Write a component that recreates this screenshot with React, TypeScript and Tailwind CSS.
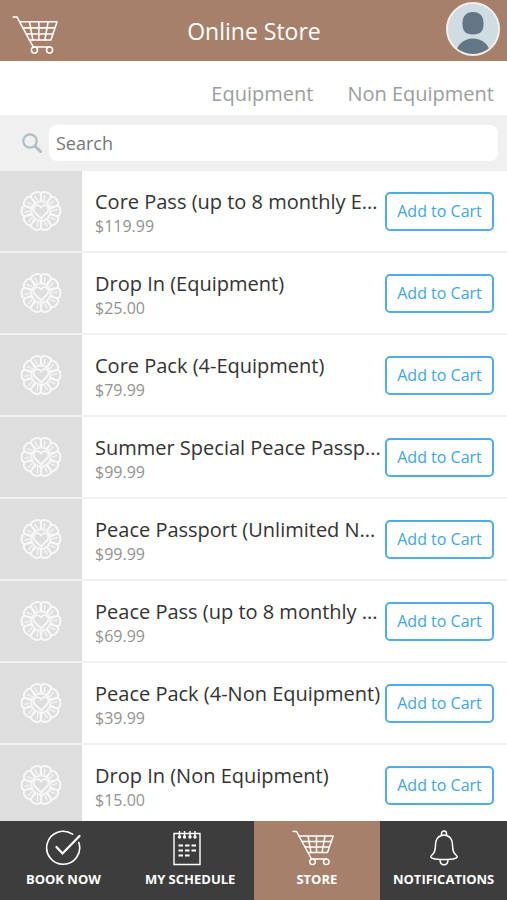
import type { ReactNode } from "react";

type Product = { name: string; price: string };

const products: Product[] = [
  { name: "Core Pass (up to 8 monthly E...", price: "$119.99" },
  { name: "Drop In (Equipment)", price: "$25.00" },
  { name: "Core Pack (4-Equipment)", price: "$79.99" },
  { name: "Summer Special Peace Passp...", price: "$99.99" },
  { name: "Peace Passport (Unlimited N...", price: "$99.99" },
  { name: "Peace Pass (up to 8 monthly ...", price: "$69.99" },
  { name: "Peace Pack (4-Non Equipment)", price: "$39.99" },
  { name: "Drop In (Non Equipment)", price: "$15.00" },
];

function CartIcon({ className }: { className: string }) {
  return (
    <svg viewBox="0 0 42 36" className={className} fill="none" stroke="currentColor" strokeWidth="1.4" strokeLinecap="round" strokeLinejoin="round" aria-hidden="true">
      <path d="M1 1.500h3.500L19.500 29h14.500" />
      <path d="M7 6h34.200L35.500 22.500H16" />
      <path d="M10 11.500h29.300M13 17h24.400M16 6l3 16.500M24.500 6v16.500M33 6l-3 16.500" />
      <circle cx="20.500" cy="31.800" r="2.800" fill="#a6806a" />
      <circle cx="34.300" cy="31.800" r="2.800" fill="#a6806a" />
    </svg>
  );
}

function CheckIcon() {
  return (
    <svg viewBox="0 0 36 36" className="size-9" fill="none" stroke="currentColor" strokeWidth="1.6" strokeLinecap="round" aria-hidden="true">
      <path d="M27.500 4.200A16.500 16.500 0 1 0 33.800 12.500" />
      <path d="M11.500 17l6 6.500L34.500 6" strokeWidth="2.2" />
    </svg>
  );
}

function ScheduleIcon() {
  return (
    <svg viewBox="0 0 28 36" className="h-9 w-7" fill="none" stroke="currentColor" strokeWidth="1.4" aria-hidden="true">
      <path d="M1 3.500h26v31H1z" />
      <path d="M6.500 1v6M11.500 1v6M17 1v6M22 1v6" />
      <path d="M6.500 7v.1M11.500 7v.1M17 7v.1M22 7v.1" strokeWidth="3.400" strokeLinecap="round" />
      <path d="M5.500 15.500h18M5.500 20.500h18M5.500 25.500h11" strokeWidth="2" strokeDasharray="4.500 2" />
    </svg>
  );
}

function BellIcon() {
  return (
    <svg viewBox="0 0 30 36" className="h-9 w-8" fill="none" stroke="currentColor" strokeWidth="1.5" strokeLinejoin="round" aria-hidden="true">
      <path d="M12.500 5.500C7.500 7 6.500 11 6.500 15c0 6-1 8.500-4 10.500-3 2.500 3 4 12.500 4s15.500-1.500 12.500-4c-3-2-4-4.500-4-10.500 0-4-1-8-6-9.500" />
      <path d="M12.500 5.500V3.500a2.500 2.500 0 0 1 5 0v2c-1.500-.6-3.500-.6-5 0z" />
      <path d="M11 29.500c0 7 8 7 8 0" />
    </svg>
  );
}

function StudioLogo() {
  return (
    <svg viewBox="-21 -21 42 42" className="size-[42px]" fill="none" stroke="#f8f8f8" strokeLinecap="round" strokeLinejoin="round" aria-hidden="true">
      {Array.from({ length: 10 }, (_, i) => (
        <g key={i} transform={`rotate(${i * 36 + 18})`}>
          <path d="M-5.300-16.200C-4.500-20.500 4.500-20.500 5.300-16.200" strokeWidth="2" />
          <path d="M-2.500-10L-5.300-16.200M2.500-10L5.300-16.200" strokeWidth="1.600" />
          <path d="M-1.300-16L0-11" strokeWidth="1.200" />
        </g>
      ))}
      <circle r="9.500" strokeWidth="1.600" />
      <path d="M0 7.500L-6.500 1C-10-5-3-8 0-3.500 3-8 10-5 6.500 1z" fill="#dedede" strokeWidth="1.800" />
    </svg>
  );
}

function ProductRow({ name, price }: Product) {
  return (
    <li className="flex h-[82px] shrink-0 items-stretch border-b-2 border-[#f0f2f2]">
      <div className="flex w-[82px] shrink-0 items-center justify-center bg-[#dedede]">
        <StudioLogo />
      </div>
      <div className="flex min-w-0 flex-1 flex-col justify-center pl-[13px] pt-0.5">
        <h2 className="truncate text-[20px] leading-7 text-[#333333]">{name}</h2>
        <p className="text-[16px] leading-5 text-[#929292]">{price}</p>
      </div>
      <button
        type="button"
        className="mr-[13px] h-[39px] w-[109px] shrink-0 self-center rounded-[5px] border-2 border-[#4eaeea] bg-white text-[16px] text-[#3da5e8]"
      >
        Add to Cart
      </button>
    </li>
  );
}

function NavItem({ label, active, children }: { label: string; active?: boolean; children: ReactNode }) {
  return (
    <a
      href="#"
      aria-current={active ? "page" : undefined}
      className={`flex flex-1 flex-col items-center pt-[9px] ${active ? "bg-[#a6806a]" : "bg-[#3d3d3d]"}`}
    >
      <span className="flex h-9 items-center">{children}</span>
      <span className="mt-[3px] whitespace-nowrap text-[13px] font-bold leading-5">{label}</span>
    </a>
  );
}

export default function App() {
  return (
    <div className="flex h-screen flex-col bg-white font-['Open_Sans','Noto_Sans',sans-serif]">
      <header className="flex h-[61px] shrink-0 items-center justify-between bg-[#a6806a] pl-3 pr-[7px] text-white">
        <button type="button" aria-label="Cart" className="w-[50px] pt-2">
          <CartIcon className="h-10 w-[46px]" />
        </button>
        <h1 className="pt-0.5 text-[23px]">Online Store</h1>
        <button type="button" aria-label="Profile" className="mb-1 size-[54px] overflow-hidden rounded-full border-2 border-[#f5efec] bg-[#cfdce2]">
          <svg viewBox="0 0 50 50" className="size-full" fill="#637685" aria-hidden="true">
            <path d="M25 8c7 0 10.500 4 10.500 11.500S33 30.500 25 30.500 14.500 27 14.500 19.500 18 8 25 8z" />
            <ellipse cx="25" cy="50" rx="17" ry="15.500" />
          </svg>
        </button>
      </header>

      <nav aria-label="Categories" className="flex h-[54px] shrink-0 items-center justify-end gap-[34px] pr-[13px] pt-3 text-[20px] text-[#9b9e9e]">
        <a href="#">Equipment</a>
        <a href="#">Non Equipment</a>
      </nav>

      <div className="flex h-14 shrink-0 items-center bg-[#f0f0f0] pl-[22px] pr-[9px]">
        <label htmlFor="search" aria-label="Search" className="w-[27px] shrink-0">
          <svg viewBox="0 0 20 20" className="size-5" fill="none" stroke="#b0bec4" strokeLinecap="round" aria-hidden="true">
            <circle cx="8" cy="8" r="6.700" strokeWidth="2.200" />
            <path d="M13.500 13.500l5 5" strokeWidth="3" />
          </svg>
        </label>
        <input
          id="search"
          type="search"
          placeholder="Search"
          className="h-9 min-w-0 flex-1 rounded-lg bg-white px-[7px] text-[18px] text-[#333333] placeholder:text-[#777777]"
        />
      </div>

      <main className="min-h-0 flex-1 overflow-hidden">
        <ul className="flex flex-col">
          {products.map((p) => (
            <ProductRow key={p.name} {...p} />
          ))}
        </ul>
      </main>

      <nav aria-label="Main" className="flex h-[79px] shrink-0 text-white">
        <NavItem label="BOOK NOW">
          <CheckIcon />
        </NavItem>
        <NavItem label="MY SCHEDULE">
          <span className="pr-1.5">
            <ScheduleIcon />
          </span>
        </NavItem>
        <NavItem label="STORE" active>
          <span className="pr-2">
            <CartIcon className="h-9 w-[42px]" />
          </span>
        </NavItem>
        <NavItem label="NOTIFICATIONS">
          <BellIcon />
        </NavItem>
      </nav>
    </div>
  );
}
